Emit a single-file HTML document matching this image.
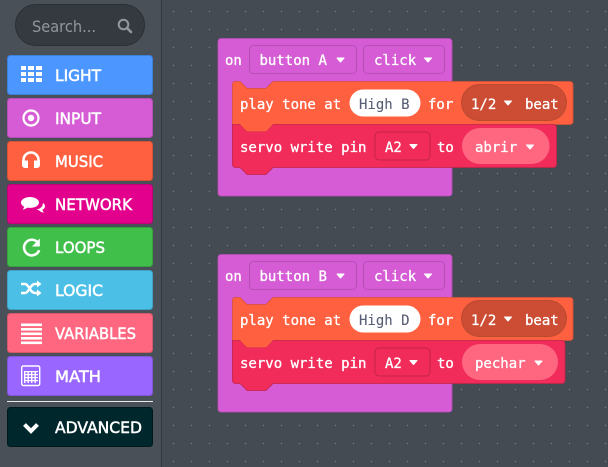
<!DOCTYPE html>
<html><head><meta charset="utf-8"><style>
html,body{margin:0;padding:0;width:608px;height:467px;overflow:hidden;background:#454b52}
svg{display:block}
.m{font-family:"DejaVu Sans Mono","Liberation Mono",monospace;font-size:14px;fill:#fff;stroke:#fff;stroke-width:.3}
.s{font-family:"DejaVu Sans","Liberation Sans",sans-serif;font-size:16px;font-weight:400;fill:#fff;stroke:#fff;stroke-width:.5}
</style></head><body>
<svg width="608" height="467" viewBox="0 0 608 467" xmlns="http://www.w3.org/2000/svg">
<defs>
<pattern id="d" x="164" y="2" width="18" height="18" patternUnits="userSpaceOnUse">
<rect x="9" y="9" width="1" height="1" fill="#767c83"/>
<rect x="8" y="9" width="3" height="1" fill="#6b7178" opacity=".25"/>
<rect x="9" y="8" width="1" height="3" fill="#6b7178" opacity=".25"/>
</pattern>
<g id="car"><path d="M-3.500 -2H3.500L0 2Z" fill="#fff" stroke="#fff" stroke-width="1" stroke-linejoin="round"/></g>
</defs>

<rect width="608" height="467" fill="#454b52"/>
<rect x="162" width="446" height="467" fill="url(#d)"/>
<rect width="161" height="467" fill="#495057"/>
<rect x="161" width="1" height="467" fill="#343a40"/>

<!-- search -->
<rect x="15.500" y="4.500" width="129" height="41" rx="20.500" fill="#343a40" stroke="#2b3035"/>
<text x="32" y="32" font-family="'DejaVu Sans','Liberation Sans',sans-serif" font-size="16" fill="#92979c" textLength="64" lengthAdjust="spacingAndGlyphs">Search...</text>
<g fill="none" stroke="#92979c" stroke-width="2"><circle cx="123.500" cy="24.500" r="4.800"/><path d="M127 28L131 32" stroke-width="2.600" stroke-linecap="round"/></g>

<!-- category buttons -->
<rect x="7.500" y="55.500" width="145" height="39" rx="3" fill="#4c97ff" stroke="#3f80d9"/>
<rect x="7.500" y="98.500" width="145" height="39" rx="3" fill="#d65cd6" stroke="#b54eb5"/>
<rect x="7.500" y="141.500" width="145" height="39" rx="3" fill="#ff6040" stroke="#d95236"/>
<rect x="7.500" y="184.500" width="145" height="39" rx="3" fill="#e3008c" stroke="#c10077"/>
<rect x="7.500" y="227.500" width="145" height="39" rx="3" fill="#40bf4a" stroke="#36a33f"/>
<rect x="7.500" y="270.500" width="145" height="39" rx="3" fill="#4cbfe6" stroke="#41a2c3"/>
<rect x="7.500" y="313.500" width="145" height="39" rx="3" fill="#ff6680" stroke="#d9576d"/>
<rect x="7.500" y="356.500" width="145" height="39" rx="3" fill="#9966ff" stroke="#8257d9"/>
<rect x="7" y="401" width="146" height="1" fill="#e8e9ea"/>
<rect x="7.500" y="407.500" width="145" height="39" rx="3" fill="#00272b" stroke="#00191c"/>

<text class="s" x="55" y="81" textLength="46" lengthAdjust="spacingAndGlyphs">LIGHT</text>
<text class="s" x="55" y="124" textLength="46" lengthAdjust="spacingAndGlyphs">INPUT</text>
<text class="s" x="55" y="167" textLength="48" lengthAdjust="spacingAndGlyphs">MUSIC</text>
<text class="s" x="55" y="210" textLength="77" lengthAdjust="spacingAndGlyphs">NETWORK</text>
<text class="s" x="55" y="253" textLength="50" lengthAdjust="spacingAndGlyphs">LOOPS</text>
<text class="s" x="55" y="296" textLength="48" lengthAdjust="spacingAndGlyphs">LOGIC</text>
<text class="s" x="55" y="339" textLength="81" lengthAdjust="spacingAndGlyphs">VARIABLES</text>
<text class="s" x="55" y="382" textLength="46" lengthAdjust="spacingAndGlyphs">MATH</text>
<text class="s" x="55" y="433" textLength="87" lengthAdjust="spacingAndGlyphs">ADVANCED</text>

<!-- icons -->
<g fill="#fff">
<rect x="21" y="66" width="5" height="4"/><rect x="28" y="66" width="6" height="4"/><rect x="36" y="66" width="6" height="4"/>
<rect x="21" y="72" width="5" height="4"/><rect x="28" y="72" width="6" height="4"/><rect x="36" y="72" width="6" height="4"/>
<rect x="21" y="78" width="5" height="4"/><rect x="28" y="78" width="6" height="4"/><rect x="36" y="78" width="6" height="4"/>
</g>
<circle cx="31" cy="118" r="7.500" fill="none" stroke="#fff" stroke-width="2.200"/><circle cx="31" cy="118" r="3.200" fill="#fff"/>
<path d="M23.500 164V160a7.500 7.500 0 0 1 15 0V164" fill="none" stroke="#fff" stroke-width="2.600"/><path d="M22 160.500h6v7.500h-3q-3 0-3-3.500ZM40 160.500h-6v7.500h3q3 0 3-3.500Z" fill="#fff"/>
<path d="M30 197c-5 0-9 2.500-9 5.500 0 1.800 1.300 3.300 3.300 4.300-.3 1.100-1 2-1.800 2.700 1.900 0 3.500-.8 4.600-1.900.9.200 1.900.3 2.900.3 5 0 9-2.400 9-5.400 0-3-4-5.500-9-5.500Z" fill="#fff"/><path d="M36.500 209.500c3.800-.7 6-2.700 6.300-5.500 .2-.4.100-.8 0-1.200 1.300.9 2.200 2.100 2.200 3.400 0 1.500-1 2.700-2.600 3.600.2 1.100.8 2 1.600 2.800-2.400-.2-3.900-1-5.300-2.500Z" fill="#fff"/>
<path d="M38.200 243a7.800 7.800 0 1 0 1 7.200" fill="none" stroke="#fff" stroke-width="2.600"/><path d="M39.800 238.500V246.500H32Z" fill="#fff"/>
<path d="M21 284h4c4 0 5 9 10 9h3M21 293h4c4 0 5-9 10-9h3" fill="none" stroke="#fff" stroke-width="2.400"/><path d="M37 280.500l4.500 3.500-4.500 3.500ZM37 289.500l4.500 3.500-4.500 3.500Z" fill="#fff"/>
<g fill="#fff"><rect x="21" y="323.500" width="21" height="2.600"/><rect x="21" y="328" width="21" height="2.600"/><rect x="21" y="332.500" width="21" height="2.600"/><rect x="21" y="337" width="21" height="2.600"/><rect x="21" y="341.500" width="21" height="2.600"/></g>
<rect x="21.700" y="366" width="18" height="19.500" rx="1.500" fill="none" stroke="#fff" stroke-width="1.400"/>
<g fill="#fff"><rect x="24" y="371" width="14" height="1.200"/><rect x="24" y="374" width="14" height="1.200"/><rect x="24" y="377" width="14" height="1.200"/><rect x="24" y="380" width="14" height="1.200"/><rect x="24" y="371" width="1.400" height="12"/><rect x="27.500" y="371" width="1.400" height="12"/><rect x="31" y="371" width="1.400" height="12"/><rect x="34.500" y="371" width="1.400" height="12"/></g>
<path d="M24.500 424.500L31 431l6.500-6.500" fill="none" stroke="#fff" stroke-width="4"/>

<!-- BLOCK 1 -->
<g id="b1">
<path d="M221 38.500H449a3 3 0 0 1 3 3V193a3 3 0 0 1-3 3H221a3 3 0 0 1-3-3V41.500a3 3 0 0 1 3-3Z" fill="#d65cd6" stroke="#b54eb5" stroke-width=".8"/>
<path d="M235 81.500h5l7 7h19l7-7H570a3 3 0 0 1 3 3V121.500a3 3 0 0 1-3 3H273l-7 7H247l-7-7h-7.500V84a2.500 2.500 0 0 1 2.500-2.500Z" fill="#ff6040" stroke="#d95236" stroke-width=".8"/>
<path d="M232.500 124.500h7.500l7 7h19l7-7H553.500a3 3 0 0 1 3 3V164.500a3 3 0 0 1-3 3H273l-7 7H247l-7-7h-4.500a3 3 0 0 1-3-3Z" fill="#f22c5a" stroke="#c2244a" stroke-width=".8"/>
<path d="M240 124.500l7 7h19l7-7" fill="#ff6040"/>
<text class="m" x="225" y="65">on</text>
<rect x="249.500" y="45.500" width="107" height="28" rx="4" fill="#d65cd6" stroke="#b54eb5"/>
<text class="m" x="259.500" y="65">button A</text><use href="#car" x="340.500" y="60"/>
<rect x="363.500" y="45.500" width="81" height="28" rx="4" fill="#d65cd6" stroke="#b54eb5"/>
<text class="m" x="374" y="65">click</text><use href="#car" x="428" y="60"/>
<text class="m" x="240" y="109">play tone at</text>
<rect x="349.500" y="89.500" width="71" height="27" rx="13.500" fill="#fff"/>
<text class="m" x="359" y="109" style="fill:#575e75;stroke:#575e75;stroke-width:.1">High B</text>
<text class="m" x="428" y="109">for</text>
<rect x="461.500" y="84.500" width="105" height="36" rx="18" fill="#cc4d33" stroke="#b84a30"/>
<text class="m" x="471" y="109">1/2</text><use href="#car" x="508" y="103"/>
<text class="m" x="525" y="109">beat</text>
<text class="m" x="240" y="152">servo write pin</text>
<rect x="375" y="132" width="55" height="28" rx="4" fill="#f22c5a" stroke="#c2244a"/>
<text class="m" x="385" y="152">A2</text><use href="#car" x="413.500" y="146.500"/>
<text class="m" x="437" y="152">to</text>
<rect x="462" y="128" width="87.500" height="36" rx="18" fill="#ff6680"/>
<text class="m" x="475" y="152">abrir</text><use href="#car" x="530" y="147"/>
</g>

<!-- BLOCK 2 -->
<g transform="translate(0 216)">
<path d="M221 38.500H449a3 3 0 0 1 3 3V193a3 3 0 0 1-3 3H221a3 3 0 0 1-3-3V41.500a3 3 0 0 1 3-3Z" fill="#d65cd6" stroke="#b54eb5" stroke-width=".8"/>
<path d="M235 81.500h5l7 7h19l7-7H570a3 3 0 0 1 3 3V121.500a3 3 0 0 1-3 3H273l-7 7H247l-7-7h-7.500V84a2.500 2.500 0 0 1 2.500-2.500Z" fill="#ff6040" stroke="#d95236" stroke-width=".8"/>
<path d="M232.500 124.500h7.500l7 7h19l7-7H562a3 3 0 0 1 3 3V164.500a3 3 0 0 1-3 3H273l-7 7H247l-7-7h-4.500a3 3 0 0 1-3-3Z" fill="#f22c5a" stroke="#c2244a" stroke-width=".8"/>
<path d="M240 124.500l7 7h19l7-7" fill="#ff6040"/>
<text class="m" x="225" y="65">on</text>
<rect x="249.500" y="45.500" width="107" height="28" rx="4" fill="#d65cd6" stroke="#b54eb5"/>
<text class="m" x="259.500" y="65">button B</text><use href="#car" x="340.500" y="60"/>
<rect x="363.500" y="45.500" width="81" height="28" rx="4" fill="#d65cd6" stroke="#b54eb5"/>
<text class="m" x="374" y="65">click</text><use href="#car" x="428" y="60"/>
<text class="m" x="240" y="109">play tone at</text>
<rect x="349.500" y="89.500" width="71" height="27" rx="13.500" fill="#fff"/>
<text class="m" x="359" y="109" style="fill:#575e75;stroke:#575e75;stroke-width:.1">High D</text>
<text class="m" x="428" y="109">for</text>
<rect x="461.500" y="84.500" width="105" height="36" rx="18" fill="#cc4d33" stroke="#b84a30"/>
<text class="m" x="471" y="109">1/2</text><use href="#car" x="508" y="103"/>
<text class="m" x="525" y="109">beat</text>
<text class="m" x="240" y="152">servo write pin</text>
<rect x="375" y="132" width="55" height="28" rx="4" fill="#f22c5a" stroke="#c2244a"/>
<text class="m" x="385" y="152">A2</text><use href="#car" x="413.500" y="146.500"/>
<text class="m" x="437" y="152">to</text>
<rect x="462" y="128" width="96" height="36" rx="18" fill="#ff6680"/>
<text class="m" x="475" y="152">pechar</text><use href="#car" x="538.500" y="147"/>
</g>
</svg>
</body></html>
